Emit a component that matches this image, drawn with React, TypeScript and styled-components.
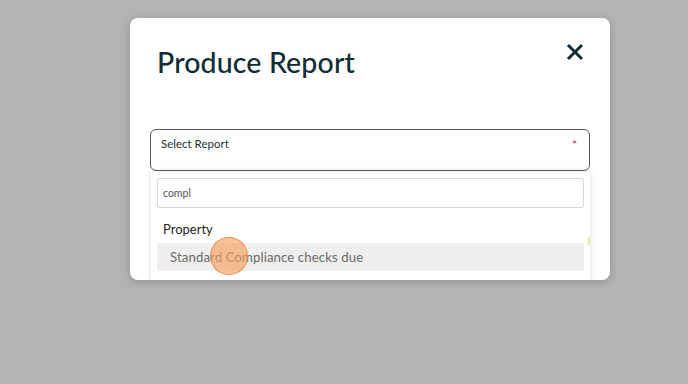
import React from "react";
import styled, { createGlobalStyle } from "styled-components";

const GlobalStyle = createGlobalStyle`
  html, body {
    margin: 0;
    padding: 0;
    background: #b3b3b3;
    font-family: "Lato", "Noto Sans", sans-serif;
  }
`;

const SPage = styled.div`
  width: 688px;
  height: 384px;
  padding: 18px 0 0 130px;
  box-sizing: border-box;
`;

const SModal = styled.div`
  position: relative;
  width: 480px;
  height: 262px;
  background: #ffffff;
  border-radius: 8px;
  box-shadow: 0 2px 8px rgba(0, 0, 0, 0.18);
  overflow: hidden;
  padding: 0 20px;
  box-sizing: border-box;
`;

const SHeader = styled.div`
  display: flex;
  justify-content: space-between;
  align-items: flex-start;
  padding: 27px 5px 0 7px;
  height: 111px;
  box-sizing: border-box;
`;

const STitle = styled.h1`
  margin: 0;
  font-size: 28.5px;
  font-weight: 500;
  color: #0f2d35;
  letter-spacing: 0.15px;
`;

const SClose = styled.button`
  border: none;
  background: none;
  padding: 0;
  margin-top: -3px;
  width: 20px;
  height: 20px;
  display: flex;
  cursor: pointer;
`;

const SField = styled.div`
  position: relative;
`;

const SSelect = styled.div`
  height: 42px;
  border: 1px solid #4b5b5f;
  border-radius: 6px;
  box-sizing: border-box;
  padding: 7px 12px 0 10px;
  display: flex;
  justify-content: space-between;
  align-items: flex-start;
`;

const SLabel = styled.span`
  font-size: 11.5px;
  color: #1d3238;
`;

const SRequired = styled.span`
  color: #b0304a;
  font-size: 12px;
`;

const SMenu = styled.div`
  position: absolute;
  top: 42px;
  left: 1px;
  right: 0;
  height: 120px;
  background: #ffffff;
  box-shadow: 0 1px 6px rgba(0, 0, 0, 0.15);
  padding: 7px 6px 0 6px;
  box-sizing: border-box;
`;

const SSearch = styled.input`
  width: 100%;
  height: 30px;
  box-sizing: border-box;
  border: 1px solid #d8d8d8;
  border-radius: 2px;
  padding: 0 5px;
  font-family: "Lato", "Noto Sans", sans-serif;
  font-size: 10.5px;
  color: #555;
  outline: none;
`;

const SGroup = styled.div`
  font-size: 13px;
  color: #222;
  padding: 13px 0 0 6px;
  height: 35px;
  box-sizing: border-box;
`;

const SOption = styled.div`
  position: relative;
  height: 28px;
  background: #efefef;
  display: flex;
  align-items: center;
  padding-left: 13px;
  font-size: 13.2px;
  letter-spacing: 0.1px;
  color: #6b6b6b;
`;

const SCursor = styled.div`
  position: absolute;
  left: 53px;
  top: -6px;
  width: 38px;
  height: 38px;
  border-radius: 50%;
  background: rgba(244, 158, 92, 0.64);
  border: 1.5px solid rgba(232, 138, 66, 0.85);
  box-sizing: border-box;
`;

const SMark = styled.div`
  position: absolute;
  right: 20px;
  top: 219px;
  width: 2px;
  height: 8px;
  background: #e3e6a8;
`;

export default function App() {
  return (
    <>
      <GlobalStyle />
      <SPage>
        <SModal>
          <SHeader>
            <STitle>Produce Report</STitle>
            <SClose aria-label="Close">
              <svg width="20" height="20" viewBox="0 0 20 20">
                <path
                  d="M3 3 L17 17 M17 3 L3 17"
                  stroke="#0f2d35"
                  strokeWidth="3"
                  strokeLinecap="butt"
                />
              </svg>
            </SClose>
          </SHeader>
          <SField>
            <SSelect>
              <SLabel>Select Report</SLabel>
              <SRequired>*</SRequired>
            </SSelect>
            <SMenu>
              <SSearch defaultValue="compl" />
              <SGroup>Property</SGroup>
              <SOption>
                Standard Compliance checks due
                <SCursor />
              </SOption>
            </SMenu>
          </SField>
          <SMark />
        </SModal>
      </SPage>
    </>
  );
}
